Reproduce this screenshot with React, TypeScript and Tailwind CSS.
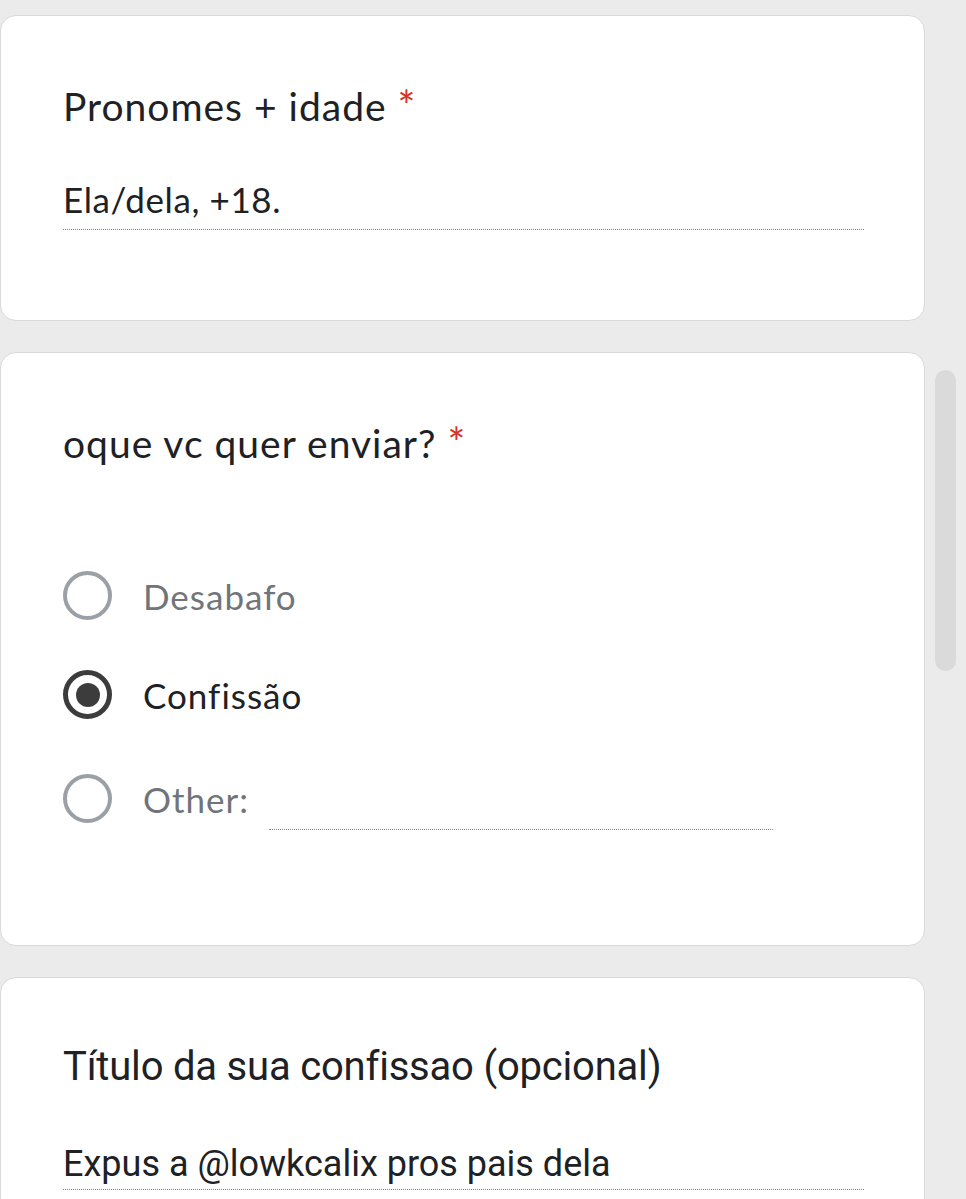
type Option = { label: string; checked?: boolean; other?: boolean };

const options: Option[] = [
  { label: "Desabafo" },
  { label: "Confissão", checked: true },
  { label: "Other:", other: true },
];

function Radio({ checked }: { checked?: boolean }) {
  return (
    <span
      className={
        checked
          ? "w-[49px] h-[49px] shrink-0 rounded-full border-[5px] border-[#3c3c3c] flex items-center justify-center"
          : "w-[49px] h-[49px] shrink-0 rounded-full border-[4px] border-[#9aa0a6]"
      }
    >
      {checked && <span className="w-[24px] h-[24px] rounded-full bg-[#3c3c3c]" />}
    </span>
  );
}

export default function App() {
  return (
    <div className="min-h-[1199px] bg-[#ebebeb] flex overflow-hidden" style={{ fontFamily: "Lato, 'Open Sans', sans-serif" }}>
      <div className="w-[925px] shrink-0 flex flex-col gap-[31px] pt-[15px]">
        {/* Card 1 */}
        <section className="bg-white border border-[#d9d9d9] rounded-[16px] h-[306px] px-[62px] pt-[65px]">
          <h2 className="text-[39px] leading-[48px] tracking-[1px] text-[#202124]">
            Pronomes + idade <span className="text-[#d93025] text-[42px]">*</span>
          </h2>
          <div className="mt-[48px] w-[801px] border-b border-dotted border-[#80868b] pb-[9px]">
            <p className="text-[35px] leading-[42px] tracking-[0.6px] text-[#202124]">Ela/dela, +18.</p>
          </div>
        </section>

        {/* Card 2 */}
        <section className="bg-white border border-[#d9d9d9] rounded-[16px] h-[594px] px-[62px] pt-[65px]">
          <h2 className="text-[39px] leading-[48px] tracking-[1px] text-[#202124]">
            oque vc quer enviar? <span className="text-[#d93025] text-[42px]">*</span>
          </h2>
          <div className="mt-[104px] flex flex-col gap-[50px]">
            {options.map((o) => (
              <div key={o.label} className={o.other ? "flex items-start mt-[5px]" : "flex items-center"}>
                <Radio checked={o.checked} />
                <span
                  className={
                    "ml-[31px] h-[49px] flex items-center text-[35px] leading-[42px] tracking-[1px] " +
                    (o.checked ? "text-[#202124]" : "text-[#70757a]")
                  }
                >
                  {o.label}
                </span>
                {o.other && <div className="ml-[20px] w-[504px] h-[56px] border-b border-dotted border-[#80868b]" />}
              </div>
            ))}
          </div>
        </section>

        {/* Card 3 */}
        <section className="bg-white border border-[#d9d9d9] rounded-t-[16px] h-[260px] px-[62px] pt-[65px]" style={{ fontFamily: "Roboto, sans-serif" }}>
          <h2 className="text-[40px] leading-[48px] text-[#202124] tracking-[-0.2px]">Título da sua confissao (opcional)</h2>
          <div className="mt-[51px] w-[801px] border-b border-dotted border-[#80868b] pb-[3px]">
            <p className="text-[36px] leading-[44px] text-[#202124]">Expus a @lowkcalix pros pais dela</p>
          </div>
        </section>
      </div>
      <div className="flex-1 flex justify-center pt-[370px]">
        <div className="w-[21px] h-[301px] rounded-full bg-[#dadada]" />
      </div>
    </div>
  );
}
